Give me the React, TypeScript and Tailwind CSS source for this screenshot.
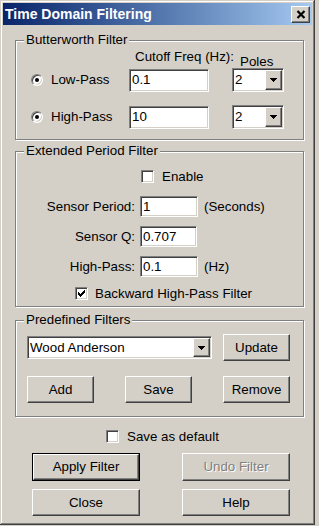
import React from "react";

const sunken =
  "border border-t-[#808080] border-l-[#808080] border-r-white border-b-white shadow-[inset_1px_1px_0_#404040,inset_-1px_-1px_0_#D4D0C8] bg-white";
const raised =
  "border border-t-white border-l-white border-r-[#404040] border-b-[#404040] shadow-[inset_-1px_-1px_0_#808080,inset_1px_1px_0_#D4D0C8] bg-[#D4D0C8]";

function Group({ label, className, children }: { label: string; className: string; children?: React.ReactNode }) {
  return (
    <div className={`relative w-[289px] border border-[#808080] shadow-[1px_1px_0_#ffffff,inset_1px_1px_0_#ffffff] ${className}`}>
      <div className="absolute -top-[9px] left-[8px] px-[2px] bg-[#D4D0C8] leading-[16px] whitespace-nowrap">{label}</div>
      {children}
    </div>
  );
}

function Arrow() {
  return (
    <svg width="7" height="4" viewBox="0 0 7 4" shapeRendering="crispEdges">
      <rect x="0" y="0" width="7" height="1" fill="#000" />
      <rect x="1" y="1" width="5" height="1" fill="#000" />
      <rect x="2" y="2" width="3" height="1" fill="#000" />
      <rect x="3" y="3" width="1" height="1" fill="#000" />
    </svg>
  );
}

function Combo({ value, className }: { value: string; className: string }) {
  return (
    <div className={`${sunken} flex p-[1px] ${className}`}>
      <div className="flex-1 flex items-center pl-[1px] leading-[16px] whitespace-nowrap">{value}</div>
      <div className={`${raised} w-[17px] flex items-center justify-center`}>
        <Arrow />
      </div>
    </div>
  );
}

function Radio() {
  return (
    <div className="w-[12px] h-[12px] rounded-full border border-t-[#808080] border-l-[#808080] border-r-white border-b-white bg-white shadow-[inset_1px_1px_0_#404040,inset_-1px_-1px_0_#D4D0C8] flex items-center justify-center">
      <div className="w-[4px] h-[4px] rounded-full bg-black" />
    </div>
  );
}

function Check({ checked }: { checked?: boolean }) {
  return (
    <div className={`${sunken} w-[13px] h-[13px] flex items-center justify-center`}>
      {checked && (
        <svg width="7" height="7" viewBox="0 0 7 7" shapeRendering="crispEdges">
          <rect x="6" y="0" width="1" height="3" fill="#000" />
          <rect x="5" y="1" width="1" height="3" fill="#000" />
          <rect x="4" y="2" width="1" height="3" fill="#000" />
          <rect x="3" y="3" width="1" height="3" fill="#000" />
          <rect x="2" y="4" width="1" height="3" fill="#000" />
          <rect x="1" y="3" width="1" height="3" fill="#000" />
          <rect x="0" y="2" width="1" height="3" fill="#000" />
        </svg>
      )}
    </div>
  );
}

function Button({ children, className, disabled }: { children: React.ReactNode; className: string; disabled?: boolean }) {
  return (
    <div
      className={`${raised} flex items-center justify-center leading-[16px] whitespace-nowrap ${
        disabled ? "text-[#808080] [text-shadow:1px_1px_0_#ffffff]" : ""
      } ${className}`}
    >
      {children}
    </div>
  );
}

function Field({ label, value, unit, w, className }: { label: string; value: string; unit?: string; w: string; className: string }) {
  return (
    <div className={`flex items-center h-[21px] ${className}`}>
      <div className="w-[119px] text-right leading-[16px] whitespace-nowrap">{label}</div>
      <div className={`${sunken} ${w} h-[21px] ml-[5px] pl-[2px] flex items-center leading-[16px]`}>{value}</div>
      {unit && <div className="ml-[6px] leading-[16px] whitespace-nowrap">{unit}</div>}
    </div>
  );
}

export default function App() {
  return (
    <div className="w-[319px] h-[526px] bg-[#D4D0C8] font-['Liberation_Sans',Arial,sans-serif] text-[13.33px] text-black">
      <div className="w-[315px] h-[525px] p-[3px] flex flex-col shadow-[inset_-1px_-1px_0_#404040,inset_1px_1px_0_#D4D0C8,inset_-2px_-2px_0_#808080,inset_2px_2px_0_#ffffff]">
        {/* Title bar */}
        <div className="h-[22px] flex items-center bg-gradient-to-r from-[#0A246A] to-[#A6CAF0] pl-[2px] pr-[2px]">
          <div className="flex-1 text-white font-bold text-[14px] leading-[16px] whitespace-nowrap">Time Domain Filtering</div>
          <div className={`${raised} w-[19px] h-[17px] flex items-center justify-center`}>
            <svg width="10" height="9" viewBox="0 0 10 9">
              <path d="M1.5 1 L8.5 8 M8.5 1 L1.5 8" stroke="#000" strokeWidth="2.2" strokeLinecap="butt" fill="none" />
            </svg>
          </div>
        </div>

        <div className="pl-[12px] flex flex-col">
          {/* Butterworth */}
          <Group label="Butterworth Filter" className="mt-[15px] h-[100px]">
            <div className="h-[27px] flex">
              <div className="w-[113px]" />
              <div className="w-[103px] pl-[6px] pt-[8px] leading-[16px] whitespace-nowrap">Cutoff Freq (Hz):</div>
              <div className="pl-[8px] pt-[13px] leading-[16px]">Poles</div>
            </div>
            {[
              ["Low-Pass", "0.1", "mt-0"],
              ["High-Pass", "10", "mt-[13px]"],
            ].map(([label, val, mt]) => (
              <div key={label} className={`flex items-center h-[24px] ${mt}`}>
                <div className="w-[113px] pl-[15px] flex items-center">
                  <Radio />
                  <span className="ml-[8px] leading-[16px]">{label}</span>
                </div>
                <div className="w-[103px]">
                  <div className={`${sunken} w-[80px] h-[23px] pl-[2px] flex items-center leading-[16px]`}>{val}</div>
                </div>
                <Combo value="2" className="w-[52px] h-[24px]" />
              </div>
            ))}
          </Group>

          {/* Extended Period */}
          <Group label="Extended Period Filter" className="mt-[11px] h-[156px]">
            <div className="flex items-center pl-[125px] mt-[18px] h-[13px]">
              <Check />
              <span className="ml-[8px] leading-[16px]">Enable</span>
            </div>
            <Field label="Sensor Period:" value="1" unit="(Seconds)" w="w-[58px]" className="mt-[13px]" />
            <Field label="Sensor Q:" value="0.707" w="w-[57px]" className="mt-[9px]" />
            <Field label="High-Pass:" value="0.1" unit="(Hz)" w="w-[58px]" className="mt-[9px]" />
            <div className="flex items-center pl-[59px] mt-[10px] h-[13px]">
              <Check checked />
              <span className="ml-[7px] leading-[16px] whitespace-nowrap">Backward High-Pass Filter</span>
            </div>
          </Group>

          {/* Predefined */}
          <Group label="Predefined Filters" className="mt-[13px] h-[97px]">
            <div className="flex items-center pl-[11px] mt-[13px] h-[27px]">
              <Combo value="Wood Anderson" className="w-[185px] h-[23px]" />
              <Button className="ml-[11px] w-[67px] h-[27px]">Update</Button>
            </div>
            <div className="flex items-center pl-[11px] mt-[15px] gap-[31px]">
              <Button className="w-[67px] h-[27px]">Add</Button>
              <Button className="w-[67px] h-[27px]">Save</Button>
              <Button className="w-[67px] h-[27px]">Remove</Button>
            </div>
          </Group>

          <div className="flex items-center pl-[91px] mt-[13px] h-[13px]">
            <Check />
            <span className="ml-[8px] leading-[16px] whitespace-nowrap">Save as default</span>
          </div>

          <div className="flex pl-[17px] mt-[10px] gap-[42px]">
            <div className="border border-black w-[108px] h-[28px] flex">
              <Button className="flex-1">Apply Filter</Button>
            </div>
            <Button disabled className="w-[108px] h-[28px]">Undo Filter</Button>
          </div>
          <div className="flex pl-[17px] mt-[8px] gap-[42px]">
            <Button className="w-[108px] h-[27px]">Close</Button>
            <Button className="w-[108px] h-[27px]">Help</Button>
          </div>
        </div>
      </div>
    </div>
  );
}
